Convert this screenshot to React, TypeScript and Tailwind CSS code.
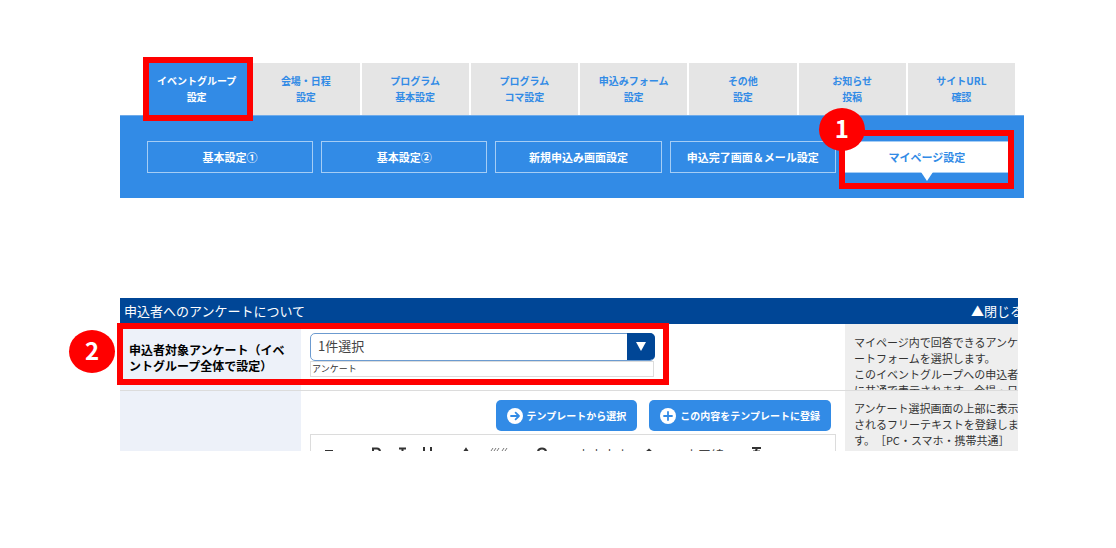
import { ReactNode } from "react";

const tabs = [
  ["イベントグループ", "設定"],
  ["会場・日程", "設定"],
  ["プログラム", "基本設定"],
  ["プログラム", "コマ設定"],
  ["申込みフォーム", "設定"],
  ["その他", "設定"],
  ["お知らせ", "投稿"],
  ["サイトURL", "確認"],
];

const subTabs = [
  "基本設定①",
  "基本設定②",
  "新規申込み画面設定",
  "申込完了画面＆メール設定",
  "マイページ設定",
];

function StepBadge({ className, children }: { className: string; children: ReactNode }) {
  return (
    <span
      className={`absolute z-20 flex h-[43px] w-[46px] items-center justify-center rounded-[50%] bg-[#ff0000] pb-1 text-2xl font-bold leading-none text-white ${className}`}
    >
      {children}
    </span>
  );
}

function Frame({ className }: { className: string }) {
  return <span className={`pointer-events-none absolute z-10 border-6 border-[#ff0000] ${className}`} />;
}

function TemplateButton({ icon, label }: { icon: string; label: string }) {
  return (
    <button
      type="button"
      className="flex h-[31px] items-center gap-1 rounded-[5px] bg-[#328be6] px-[11px] text-[10px] font-bold text-white"
    >
      <svg viewBox="0 0 16 16" className="h-4 w-4" fill="none">
        <circle cx="8" cy="8" r="8" fill="#fff" />
        <path d={icon} stroke="#328be6" strokeWidth="1.8" strokeLinecap="round" strokeLinejoin="round" />
      </svg>
      {label}
    </button>
  );
}

export default function App() {
  return (
    <main className="min-h-screen bg-white pt-[63px] pr-[92px] pl-[120px] font-['Noto_Sans_CJK_JP',sans-serif] text-[#333] [text-spacing-trim:space-all]">
      {/* Main tabs */}
      <nav className="mr-[9px] ml-[23px] grid grid-cols-8 gap-[2px]">
        {tabs.map(([line1, line2], i) => (
          <a
            key={i}
            href="#"
            className={`relative flex h-[52px] flex-col items-center justify-center text-[10px] leading-4 font-bold whitespace-nowrap ${
              i === 0 ? "bg-[#328be6] text-white" : "bg-[#e5e5e5] text-[#328be6]"
            }`}
          >
            <span>{line1}</span>
            <span>{line2}</span>
            {i === 0 && <Frame className="-top-[6px] -right-[3px] -bottom-[6px] left-0" />}
          </a>
        ))}
      </nav>

      {/* Sub tabs */}
      <nav className="grid grid-cols-5 gap-2 border-t border-[#6fabea] bg-[#328be6] pt-[25px] pr-[14px] pb-[25px] pl-[27px]">
        {subTabs.map((label, i) => (
          <a
            key={label}
            href="#"
            className={`relative flex h-8 items-center justify-center border border-[#a5cdf5] text-[11px] font-bold whitespace-nowrap ${
              i === 4 ? "bg-white text-[#328be6]" : "text-white"
            }`}
          >
            {label}
            {i === 4 && (
              <>
                <svg viewBox="0 0 12 9" className="absolute top-full h-[9px] w-3">
                  <path d="M0 0h12L6 9z" fill="#fff" />
                </svg>
                <Frame className="-top-[12px] -right-[5px] -bottom-[17px] -left-[6px]" />
                <StepBadge className="-top-[34px] -left-[26px]">1</StepBadge>
              </>
            )}
          </a>
        ))}
      </nav>

      {/* Questionnaire settings */}
      <section className="relative mt-[100px] mr-[6px]">
        <Frame className="top-[25px] -left-[3px] h-[62px] w-[552px]" />
        <StepBadge className="top-[32px] -left-[51px]">2</StepBadge>

        <header className="flex h-[26px] items-center justify-between bg-[#004696] pl-1 text-[13px] text-white">
          <h2>申込者へのアンケートについて</h2>
          <button type="button" className="flex w-[47px] overflow-hidden whitespace-nowrap">
            <span>▲閉じる</span>
          </button>
        </header>

        <div className="flex h-[67px] overflow-hidden border-b border-[#dcdcdc]">
          <label
            htmlFor="survey"
            className="w-[181px] shrink-0 bg-[#edf1f9] pt-[18px] pr-3 pl-[9px] text-xs leading-4 font-bold text-black"
          >
            申込者対象アンケート（イベントグループ全体で設定）
          </label>
          <div className="flex-1 pt-[9px] pl-[9px]">
            <div className="relative w-[345px]">
              <select
                id="survey"
                className="block h-[28px] w-full appearance-none rounded-[5px] border border-[#6c9bd0] bg-white pb-[2px] pl-[7px] text-[13px] text-[#444]"
              >
                <option>1件選択</option>
              </select>
              <span className="pointer-events-none absolute top-0 right-0 flex h-[27px] w-7 items-center justify-center rounded-r-[5px] bg-[#004696]">
                <svg viewBox="0 0 10 9" className="h-[9px] w-[10px]">
                  <path d="M0 0h10L5 9z" fill="#fff" />
                </svg>
              </span>
            </div>
            <p className="h-4 w-[344px] border border-[#dcdcdc] pl-px text-[9px] leading-[14px]">アンケート</p>
          </div>
          <p className="w-[173px] shrink-0 bg-[#eee] pt-[10px] pl-[9px] text-[11px] leading-4 whitespace-nowrap">
            マイページ内で回答できるアンケ
            <br />
            ートフォームを選択します。
            <br />
            このイベントグループへの申込者
            <br />
            に共通で表示されます。会場・日
          </p>
        </div>

        <div className="flex h-[60px] overflow-hidden">
          <div className="w-[181px] shrink-0 bg-[#edf1f9]" />
          <div className="min-w-0 flex-1 px-[9px] pt-[9px]">
            <div className="flex justify-end gap-3 pr-[5px]">
              <TemplateButton icon="M4 8h8M8.6 4.6 12 8l-3.4 3.4" label="テンプレートから選択" />
              <TemplateButton icon="M4 8h8M8 4v8" label="この内容をテンプレートに登録" />
            </div>
            {/* Editor toolbar */}
            <div className="mt-[3px] flex h-10 items-start border border-[#dcdcdc] pt-3 pl-3 text-[13px] leading-4 whitespace-nowrap text-[#444]">
              <svg viewBox="0 0 250 5" className="h-[5px] w-[250px] shrink-0" fill="none" stroke="#333" strokeWidth="2">
                <path d="M2 4h8" />
                <path d="M50 5V1.500h4q3 0 3 3.500M76 1.500h7M79.500 1v4M101 0v5M108 0v5M141 5l2-3 2 3M215 5q0-3.500 4-3.500t4 3.500" />
                <path d="m168 4 2-3m1 3 2-3m1 3 2-3m3 3 2-3m1 3 2-3" stroke="#777" strokeWidth="1" />
              </svg>
              <span className="ml-1">文字大小</span>
              <svg viewBox="0 0 10 5" className="ml-[15px] h-[5px] w-[10px] shrink-0">
                <path d="M1 5l4-3.500L9 5z" fill="#333" />
              </svg>
              <span className="ml-[31px]">水平線</span>
              <svg viewBox="0 0 11 5" className="ml-[27px] h-[5px] w-[11px] shrink-0" fill="none" stroke="#333" strokeWidth="2">
                <path d="M1 1h9M6 1 4.500 5M2 4.500h7" />
              </svg>
            </div>
          </div>
          <p className="w-[173px] shrink-0 bg-[#eee] pt-[9px] pl-[9px] text-[11px] leading-4 whitespace-nowrap">
            アンケート選択画面の上部に表示
            <br />
            されるフリーテキストを登録しま
            <br />
            す。［PC・スマホ・携帯共通］
          </p>
        </div>
      </section>
    </main>
  );
}
